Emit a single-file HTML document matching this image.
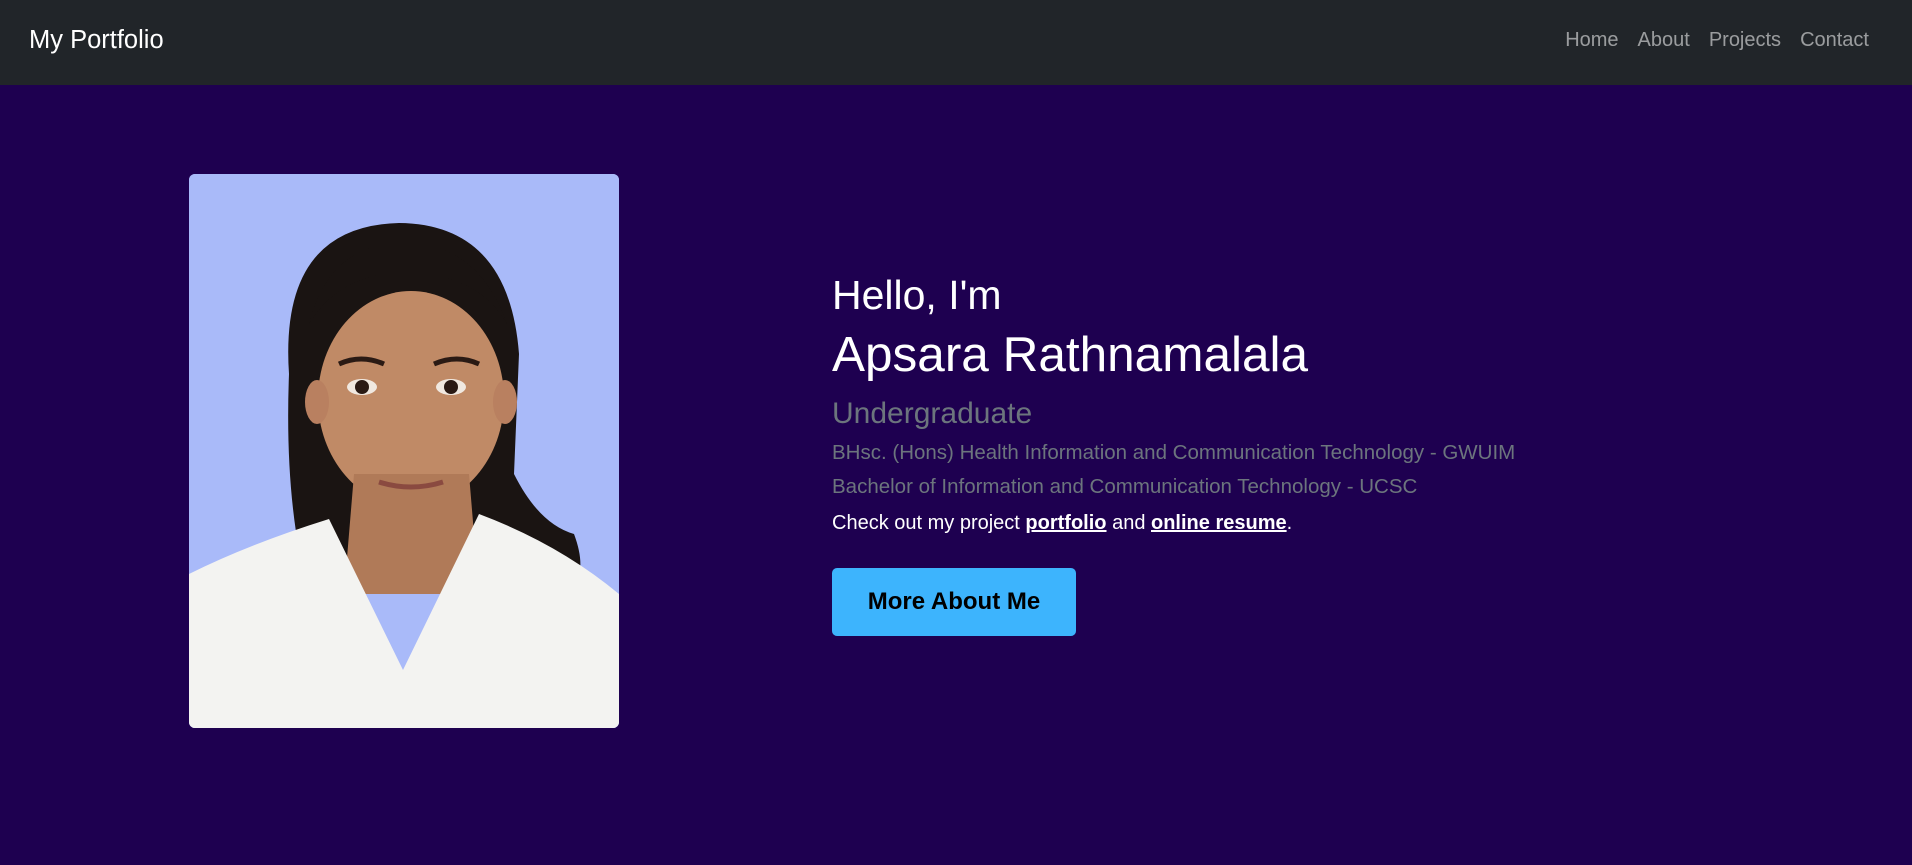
<!DOCTYPE html>
<html><head><meta charset="utf-8"><style>
*{margin:0;padding:0;box-sizing:border-box}
body{width:1912px;height:865px;overflow:hidden;background:#1e0050;font-family:"Liberation Sans",sans-serif}
nav{height:85px;background:#212529;position:relative}
.brand{position:absolute;left:29px;top:26px;color:#fff;font-size:25.5px}
.links{position:absolute;right:43px;top:29px;font-size:20px;color:rgba(255,255,255,.55)}
.links span{margin-left:19px}
.photo{position:absolute;left:189px;top:174px;width:430px;height:554px;border-radius:6px;overflow:hidden;background:#a9baf9}
.t{position:absolute;left:832px;white-space:nowrap}
.btn{position:absolute;left:832px;top:568px;width:244px;height:68px;background:#3db4fd;border-radius:5px;font-weight:bold;font-size:24px;color:#000;text-align:center;line-height:68px}
a{color:#fff;font-weight:bold;text-decoration:underline}
</style></head><body>
<nav><div class="brand">My Portfolio</div><div class="links"><span>Home</span><span>About</span><span>Projects</span><span>Contact</span></div></nav>
<div class="photo">
<svg width="430" height="554" viewBox="0 0 430 554">
<rect width="430" height="554" fill="#a9baf9"/>
<path d="M100 200 Q90 52 210 49 Q320 50 330 180 L325 300 Q350 350 385 360 Q400 400 380 420 L320 420 L120 420 Q95 330 100 200Z" fill="#1a1412"/>
<ellipse cx="222" cy="225" rx="93" ry="108" fill="#c08a66"/>
<ellipse cx="128" cy="228" rx="12" ry="22" fill="#b98060"/><ellipse cx="316" cy="228" rx="12" ry="22" fill="#b98060"/>
<path d="M165 300 L280 300 L290 420 L155 420Z" fill="#b07a58"/>
<path d="M0 400 Q60 370 140 345 L214 496 L290 340 Q370 370 430 420 L430 554 L0 554Z" fill="#f3f3f1"/>
<path d="M120 150 Q140 70 215 68 Q290 70 318 150 Q290 100 215 98 Q150 100 120 150Z" fill="#1a1412"/>
<path d="M150 190 Q172 180 195 190" stroke="#2a1a14" stroke-width="5" fill="none"/>
<path d="M245 190 Q268 180 290 190" stroke="#2a1a14" stroke-width="5" fill="none"/>
<ellipse cx="173" cy="213" rx="15" ry="8" fill="#f0e8e0"/><circle cx="173" cy="213" r="7" fill="#2a1a14"/>
<ellipse cx="262" cy="213" rx="15" ry="8" fill="#f0e8e0"/><circle cx="262" cy="213" r="7" fill="#2a1a14"/>
<path d="M190 308 Q222 318 254 308" stroke="#8a4a40" stroke-width="5" fill="none"/>
</svg></div>
<div class="t" style="top:272px;font-size:41px;color:#fff">Hello, I'm</div>
<div class="t" style="top:326px;font-size:49.5px;color:#fff">Apsara Rathnamalala</div>
<div class="t" style="top:397px;font-size:30px;color:#6c757d">Undergraduate</div>
<div class="t" style="top:441px;font-size:20.5px;color:#6c757d">BHsc. (Hons) Health Information and Communication Technology - GWUIM</div>
<div class="t" style="top:475px;font-size:20.5px;color:#6c757d">Bachelor of Information and Communication Technology - UCSC</div>
<div class="t" style="top:512px;font-size:20px;color:#fff">Check out my project <a>portfolio</a> and <a>online resume</a>.</div>
<div class="btn">More About Me</div>
</body></html>
